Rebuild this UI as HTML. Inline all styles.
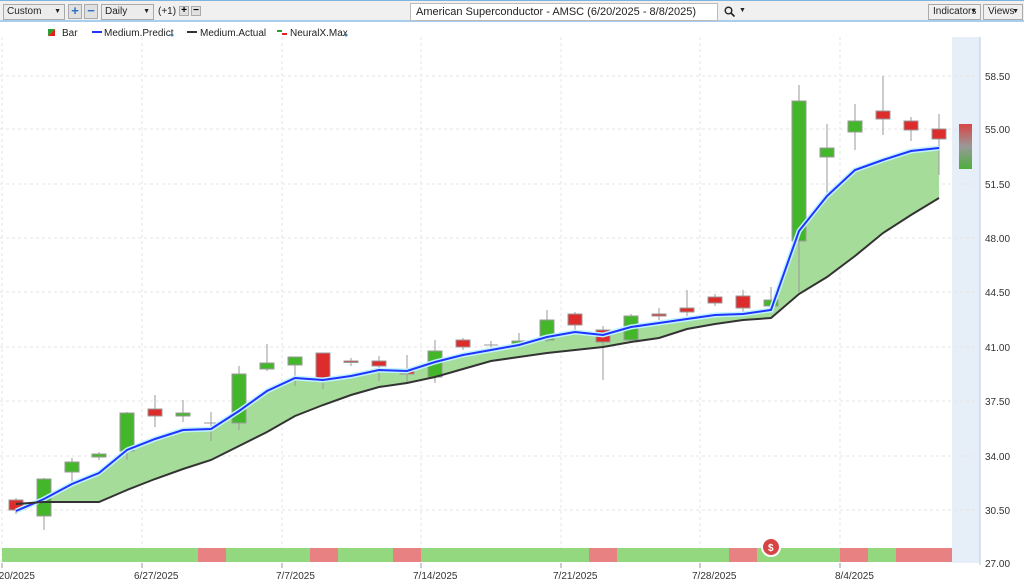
<!DOCTYPE html>
<html><head><meta charset="utf-8"><style>
body{margin:0;width:1024px;height:585px;overflow:hidden;background:#fff;font-family:"Liberation Sans",sans-serif;}
.tb{position:absolute;left:0;top:0;width:1024px;height:22px;background:#f0f0f0;border-top:1px solid #7fb3e0;border-bottom:2px solid #a9cdec;box-sizing:border-box;}
.sel{position:absolute;top:3px;height:16px;background:#ececec;border:1px solid #aaa;box-sizing:border-box;font-size:10px;line-height:14px;padding-left:3px;color:#222}
.sel:after{content:"▼";position:absolute;right:3px;top:0;font-size:7px}
.btn{position:absolute;top:3px;width:14px;height:15px;background:#e0e0e0;border:1px solid #aaa;box-sizing:border-box;color:#2a6fc9;font-weight:bold;font-size:13px;line-height:12px;text-align:center}
.t{position:absolute;font-size:10px;color:#222}
</style></head><body>
<div class="tb">
<div class="sel" style="left:3px;width:62px">Custom</div>
<div class="btn" style="left:68px">+</div>
<div class="btn" style="left:84px">−</div>
<div class="sel" style="left:101px;width:53px">Daily</div>
<div class="t" style="left:158px;top:5px">(+1)</div>
<div class="btn" style="left:179px;top:5px;width:10px;height:10px;font-size:10px;line-height:8px;color:#000">+</div>
<div class="btn" style="left:191px;top:5px;width:10px;height:10px;font-size:10px;line-height:8px;color:#000">−</div>
<div style="position:absolute;left:410px;top:2px;width:308px;height:18px;background:#fff;border:1px solid #bbb;box-sizing:border-box;font-size:11px;line-height:16px;padding-left:5px;color:#222">American Superconductor - AMSC (6/20/2025 - 8/8/2025)</div>
<svg style="position:absolute;left:724px;top:5px" width="12" height="12"><circle cx="4.5" cy="4.5" r="3.3" fill="none" stroke="#222" stroke-width="1.4"/><line x1="7" y1="7" x2="10.5" y2="10.5" stroke="#222" stroke-width="1.6"/></svg>
<div class="t" style="left:739px;top:6px;font-size:7px">▼</div>
<div class="sel" style="left:928px;width:53px;background:#f0f0f0;font-size:10px;padding-left:4px">Indicators</div>
<div class="sel" style="left:983px;width:40px;background:#f0f0f0;padding-left:4px">Views</div>
</div>
<svg width="1024" height="585" style="position:absolute;left:0;top:0" font-family="Liberation Sans, sans-serif">
<rect x="952" y="37" width="28" height="526" fill="#e6eef7"/>
<g stroke="#e6e6e6" stroke-dasharray="3,3" stroke-width="1">
<line x1="0" y1="76" x2="980" y2="76"/><line x1="0" y1="129" x2="980" y2="129"/><line x1="0" y1="184" x2="980" y2="184"/><line x1="0" y1="238" x2="980" y2="238"/><line x1="0" y1="292" x2="980" y2="292"/><line x1="0" y1="347" x2="980" y2="347"/><line x1="0" y1="401" x2="980" y2="401"/><line x1="0" y1="456" x2="980" y2="456"/><line x1="0" y1="510" x2="980" y2="510"/>
<line x1="2" y1="37" x2="2" y2="563"/><line x1="142" y1="37" x2="142" y2="563"/><line x1="282" y1="37" x2="282" y2="563"/><line x1="421" y1="37" x2="421" y2="563"/><line x1="561" y1="37" x2="561" y2="563"/><line x1="700" y1="37" x2="700" y2="563"/><line x1="840" y1="37" x2="840" y2="563"/>
</g>
<line x1="980" y1="37" x2="980" y2="565" stroke="#b8cde3"/>
<g font-size="10" fill="#333">
<text x="985" y="80">58.50</text><text x="985" y="133">55.00</text><text x="985" y="188">51.50</text><text x="985" y="242">48.00</text><text x="985" y="296">44.50</text><text x="985" y="351">41.00</text><text x="985" y="405">37.50</text><text x="985" y="460">34.00</text><text x="985" y="514">30.50</text><text x="985" y="567">27.00</text>
<text x="-4" y="579">/20/2025</text><text x="134" y="579">6/27/2025</text><text x="276" y="579">7/7/2025</text><text x="413" y="579">7/14/2025</text><text x="553" y="579">7/21/2025</text><text x="692" y="579">7/28/2025</text><text x="835" y="579">8/4/2025</text>
</g>
<polygon points="48,29 55,29 48,36" fill="#2aa02a"/><polygon points="55,29 55,36 48,36" fill="#d22"/>
<text x="62" y="36" font-size="10" fill="#222">Bar</text>
<line x1="92" y1="32" x2="102" y2="32" stroke="#2233ff" stroke-width="2"/><text x="104" y="36" font-size="10" fill="#222">Medium.Predict</text><circle cx="172" cy="35" r="1.5" fill="#4a7fa8"/>
<line x1="187" y1="32" x2="197" y2="32" stroke="#333" stroke-width="2"/><text x="200" y="36" font-size="10" fill="#222">Medium.Actual</text>
<line x1="277" y1="31" x2="282" y2="31" stroke="#2aa02a" stroke-width="2"/><line x1="282" y1="34" x2="287" y2="34" stroke="#d22" stroke-width="2"/><text x="290" y="36" font-size="10" fill="#222">NeuralX.Max</text><circle cx="346" cy="35" r="1.5" fill="#4a7fa8"/>
<polygon fill="#a6dc9a" points="16,511 44,499 72,484 99,473 127,450 155,439 183,430 211,429 239,411 267,391 295,378 323,380 351,376 379,370 407,371 435,362 463,355 491,350 519,345 547,337 575,332 603,335 631,327 659,323 687,319 715,315 743,314 771,310 799,231 827,196 855,170 883,160 911,151 939,148 939,198 911,215 883,233 855,256 827,277 799,294 771,318 743,320 715,324 687,329 659,338 631,342 603,347 575,350 547,353 519,357 491,361 463,369 435,377 407,383 379,387 351,395 323,405 295,416 267,432 239,446 211,460 183,469 155,479 127,490 99,502 72,502 44,502 16,504"/>
<g stroke="#999" stroke-width="1">
<line x1="16" y1="498" x2="16" y2="514"/><rect x="9" y="500" width="14" height="10" fill="#dd2c2c"/>
<line x1="44" y1="478" x2="44" y2="530"/><rect x="37" y="479" width="14" height="37" fill="#44b62a"/>
<line x1="72" y1="458" x2="72" y2="482"/><rect x="65" y="462" width="14" height="10" fill="#44b62a"/>
<line x1="99" y1="452" x2="99" y2="460"/><rect x="92" y="454" width="14" height="3" fill="#44b62a"/>
<line x1="127" y1="412" x2="127" y2="460"/><rect x="120" y="413" width="14" height="38" fill="#44b62a"/>
<line x1="155" y1="395" x2="155" y2="427"/><rect x="148" y="409" width="14" height="7" fill="#dd2c2c"/>
<line x1="183" y1="400" x2="183" y2="422"/><rect x="176" y="413" width="14" height="3" fill="#44b62a"/>
<line x1="211" y1="412" x2="211" y2="441"/><line x1="204" y1="423" x2="218" y2="423"/>
<line x1="239" y1="366" x2="239" y2="430"/><rect x="232" y="374" width="14" height="49" fill="#44b62a"/>
<line x1="267" y1="344" x2="267" y2="371"/><rect x="260" y="363" width="14" height="6" fill="#44b62a"/>
<line x1="295" y1="357" x2="295" y2="386"/><rect x="288" y="357" width="14" height="8" fill="#44b62a"/>
<line x1="323" y1="353" x2="323" y2="389"/><rect x="316" y="353" width="14" height="25" fill="#dd2c2c"/>
<line x1="351" y1="358" x2="351" y2="366"/><rect x="344" y="361" width="14" height="1.5" fill="#dd2c2c"/>
<line x1="379" y1="356" x2="379" y2="381"/><rect x="372" y="361" width="14" height="5" fill="#dd2c2c"/>
<line x1="407" y1="355" x2="407" y2="383"/><rect x="400" y="371" width="14" height="3" fill="#dd2c2c"/>
<line x1="435" y1="340" x2="435" y2="383"/><rect x="428" y="351" width="14" height="26" fill="#44b62a"/>
<line x1="463" y1="338" x2="463" y2="350"/><rect x="456" y="340" width="14" height="7" fill="#dd2c2c"/>
<line x1="491" y1="341" x2="491" y2="350"/><line x1="484" y1="345" x2="498" y2="345"/>
<line x1="519" y1="333" x2="519" y2="348"/><rect x="512" y="341" width="14" height="4" fill="#44b62a"/>
<line x1="547" y1="310" x2="547" y2="342"/><rect x="540" y="320" width="14" height="20" fill="#44b62a"/>
<line x1="575" y1="312" x2="575" y2="330"/><rect x="568" y="314" width="14" height="11" fill="#dd2c2c"/>
<line x1="603" y1="326" x2="603" y2="380"/><rect x="596" y="330" width="14" height="12" fill="#dd2c2c"/>
<line x1="631" y1="314" x2="631" y2="342"/><rect x="624" y="316" width="14" height="24" fill="#44b62a"/>
<line x1="659" y1="308" x2="659" y2="320"/><rect x="652" y="314" width="14" height="2" fill="#dd2c2c"/>
<line x1="687" y1="290" x2="687" y2="316"/><rect x="680" y="308" width="14" height="4" fill="#dd2c2c"/>
<line x1="715" y1="294" x2="715" y2="306"/><rect x="708" y="297" width="14" height="6" fill="#dd2c2c"/>
<line x1="743" y1="290" x2="743" y2="312"/><rect x="736" y="296" width="14" height="12" fill="#dd2c2c"/>
<line x1="771" y1="287" x2="771" y2="310"/><rect x="764" y="300" width="14" height="6" fill="#44b62a"/>
<line x1="799" y1="85" x2="799" y2="292"/><rect x="792" y="101" width="14" height="140" fill="#44b62a"/>
<line x1="827" y1="124" x2="827" y2="200"/><rect x="820" y="148" width="14" height="9" fill="#44b62a"/>
<line x1="855" y1="104" x2="855" y2="150"/><rect x="848" y="121" width="14" height="11" fill="#44b62a"/>
<line x1="883" y1="76" x2="883" y2="135"/><rect x="876" y="111" width="14" height="8" fill="#dd2c2c"/>
<line x1="911" y1="117" x2="911" y2="141"/><rect x="904" y="121" width="14" height="9" fill="#dd2c2c"/>
<line x1="939" y1="114" x2="939" y2="175"/><rect x="932" y="129" width="14" height="10" fill="#dd2c2c"/>
</g>
<defs><linearGradient id="g" x1="0" y1="0" x2="0" y2="1"><stop offset="0" stop-color="#d94444"/><stop offset=".5" stop-color="#999"/><stop offset="1" stop-color="#4caf3c"/></linearGradient></defs>
<rect x="959" y="124" width="13" height="45" fill="url(#g)"/>
<polyline fill="none" stroke="#bff3ff" stroke-width="5" points="16,511 44,499 72,484 99,473 127,450 155,439 183,430 211,429 239,411 267,391 295,378 323,380 351,376 379,370 407,371 435,362 463,355 491,350 519,345 547,337 575,332 603,335 631,327 659,323 687,319 715,315 743,314 771,310 799,231 827,196 855,170 883,160 911,151 939,148"/>
<polyline fill="none" stroke="#2233ff" stroke-width="2" points="16,511 44,499 72,484 99,473 127,450 155,439 183,430 211,429 239,411 267,391 295,378 323,380 351,376 379,370 407,371 435,362 463,355 491,350 519,345 547,337 575,332 603,335 631,327 659,323 687,319 715,315 743,314 771,310 799,231 827,196 855,170 883,160 911,151 939,148"/>
<polyline fill="none" stroke="#333" stroke-width="2" points="16,504 44,502 72,502 99,502 127,490 155,479 183,469 211,460 239,446 267,432 295,416 323,405 351,395 379,387 407,383 435,377 463,369 491,361 519,357 547,353 575,350 603,347 631,342 659,338 687,329 715,324 743,320 771,318 799,294 827,277 855,256 883,233 911,215 939,198"/>
<rect x="2" y="548" width="950" height="14" fill="#93d87f"/>
<g fill="#e88282"><rect x="198" y="548" width="28" height="14"/><rect x="310" y="548" width="28" height="14"/><rect x="393" y="548" width="28" height="14"/><rect x="589" y="548" width="28" height="14"/><rect x="729" y="548" width="28" height="14"/><rect x="840" y="548" width="28" height="14"/><rect x="896" y="548" width="56" height="14"/></g>
<circle cx="771" cy="547" r="9" fill="#d84444" stroke="#fff" stroke-width="2"/><text x="768" y="551" font-size="10" fill="#fff" font-weight="bold">$</text>
<g stroke="#999"><line x1="2" y1="563" x2="2" y2="568"/><line x1="142" y1="563" x2="142" y2="568"/><line x1="282" y1="563" x2="282" y2="568"/><line x1="421" y1="563" x2="421" y2="568"/><line x1="561" y1="563" x2="561" y2="568"/><line x1="700" y1="563" x2="700" y2="568"/><line x1="840" y1="563" x2="840" y2="568"/></g>
</svg>
</body></html>
